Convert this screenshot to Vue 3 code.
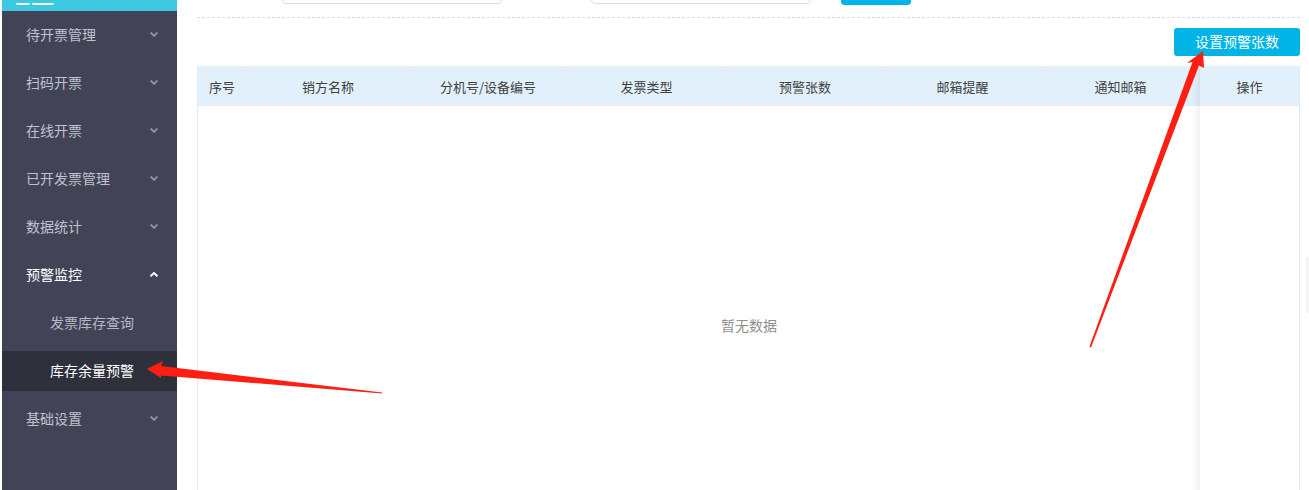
<template>
    <div class="page">
        <aside class="side">
            <div class="side_logo">
                <svg width="60" height="3" viewBox="0 0 60 3">
                    <path d="M16 0h14v1q-1 1-3 1h-8q-2 0-3-1zM32 0h22v1q-1 1-3 1h-16q-2 0-3-1z" fill="#fff"/>
                </svg>
            </div>
            <div v-for="menu in menus" :key="menu.name">
                <div :class="['menu_item', {menu_item_open: menu.children}]">
                    <span class="menu_name">{{menu.name}}</span>
                    <svg class="menu_arrow" width="10" height="7" viewBox="0 0 10 7">
                        <path :d="menu.children ? 'M1.5 5.2 5 2l3.5 3.2' : 'M1.5 1.5 5 4.8l3.5-3.3'" fill="none" stroke="currentColor" stroke-width="2"/>
                    </svg>
                </div>
                <div class="sub_menu" v-if="menu.children">
                    <div
                        v-for="child in menu.children"
                        :key="child.name"
                        :class="['sub_item', {sub_item_active: child.active}]"
                    >{{child.name}}</div>
                </div>
            </div>
        </aside>

        <main class="main">
            <div class="filter">
                <div class="filter_input"></div>
                <div class="filter_input filter_input_second"></div>
                <div class="filter_button"></div>
            </div>
            <div class="toolbar">
                <button class="set_button">设置预警张数</button>
            </div>
            <div class="table">
                <div class="table_left">
                    <div class="table_head">
                        <div
                            v-for="col in columns"
                            :key="col.name"
                            :class="['head_cell', {head_cell_first: col.first}]"
                            :style="{width: col.width + 'px'}"
                        >{{col.name}}</div>
                    </div>
                    <div class="table_body">暂无数据</div>
                </div>
                <div class="table_fixed">
                    <div class="fixed_head">操作</div>
                </div>
            </div>
        </main>

        <div class="scroll_thumb"></div>

        <svg class="marks" width="1309" height="490" viewBox="0 0 1309 490">
            <polygon fill="#ff1e12" points="147,369 163,361 161,366 382,392.6 382,393.6 161,375.5 161,378"/>
            <polygon fill="#ff1e12" points="1203,51 1187,63 1192.5,62 1089.5,346.5 1091,347.5 1199,65.5 1204,68"/>
        </svg>
    </div>
</template>

<script setup>
const menus = [
    {name: "待开票管理"},
    {name: "扫码开票"},
    {name: "在线开票"},
    {name: "已开发票管理"},
    {name: "数据统计"},
    {
        name: "预警监控",
        children: [
            {name: "发票库存查询"},
            {name: "库存余量预警", active: true}
        ]
    },
    {name: "基础设置"}
];

const columns = [
    {name: "序号", width: 50, first: true},
    {name: "销方名称", width: 163},
    {name: "分机号/设备编号", width: 157},
    {name: "发票类型", width: 160},
    {name: "预警张数", width: 157},
    {name: "邮箱提醒", width: 158},
    {name: "通知邮箱", width: 158}
];
</script>

<style>
html, body {
    margin: 0;
    background: #ffffff;
}
</style>

<style scoped>
.page{
    position: relative;
    display: flex;
    width: 1309px;
    height: 490px;
    overflow: hidden;
    background: #ffffff;
    font-family: "Noto Sans CJK SC", "Liberation Sans", sans-serif;
    font-size: 14px;
}

.side{
    flex: none;
    width: 175px;
    margin-left: 2px;
    background: #434358;
}

.side_logo{
    height: 11px;
    background: #3cc8de;
    line-height: 0;
}

.side_logo svg{
    margin-left: -2px;
}

.menu_item{
    display: flex;
    align-items: center;
    justify-content: space-between;
    height: 48px;
    padding: 0 18px 0 24px;
    color: #bdc3cc;
}

.menu_name{
    margin-bottom: 2px;
}

.menu_item_open{
    color: #ffffff;
}

.menu_arrow{
    color: #8d8d9d;
    margin-bottom: 1px;
}

.menu_item_open .menu_arrow{
    color: #ffffff;
}

.sub_menu{
    padding: 4px 0;
}

.sub_item{
    display: flex;
    align-items: center;
    box-sizing: border-box;
    height: 40px;
    margin-bottom: 8px;
    padding: 0 0 2px 48px;
    color: #b4bac3;
}

.sub_item:last-child{
    margin-bottom: 0;
}

.sub_item_active{
    background: #2e303b;
    color: #ffffff;
}

.main{
    flex: 1;
    min-width: 0;
    padding: 0 9px 0 20px;
}

.filter{
    display: flex;
    align-items: flex-end;
    height: 5px;
    padding: 0 0 12px 85px;
    border-bottom: 1px dashed #dcdcdc;
    overflow: hidden;
}

.filter_input{
    width: 218px;
    height: 30px;
    flex: none;
    margin-bottom: 1px;
    border: 1px solid #dcdfe8;
    border-radius: 4px;
}

.filter_input_second{
    margin-left: 89px;
}

.filter_button{
    width: 70px;
    height: 32px;
    flex: none;
    margin-left: 30px;
    border-radius: 4px;
    background: #00b4e6;
}

.toolbar{
    display: flex;
    justify-content: flex-end;
    margin-top: 10px;
}

.set_button{
    width: 126px;
    height: 28px;
    padding: 0 0 2px;
    border: none;
    border-radius: 3px;
    background: #00b4e6;
    color: #ffffff;
    font-family: inherit;
    font-size: 14px;
}

.table{
    display: flex;
    height: 480px;
    margin-top: 10px;
    border-right: 1px solid #e6e8f2;
}

.table_left{
    display: flex;
    flex-direction: column;
    width: 1003px;
    flex: none;
}

.table_head{
    display: flex;
    height: 40px;
    background: #e2f0fc;
    color: #3f3f3f;
    font-size: 13px;
}

.head_cell{
    display: flex;
    align-items: center;
    justify-content: center;
    flex: none;
    box-sizing: border-box;
    border-right: 1px solid #e6eef8;
}

.head_cell_first{
    justify-content: flex-start;
    padding-left: 12px;
}

.table_body{
    display: flex;
    flex: 1;
    align-items: center;
    justify-content: center;
    padding: 0 0 2px 100px;
    border-left: 1px solid #e6e8f2;
    color: #8e8e8e;
}

.table_fixed{
    flex: 1;
    background: #ffffff;
    box-shadow: -4px 0 6px rgba(0, 0, 0, 0.06);
    z-index: 1;
}

.fixed_head{
    display: flex;
    align-items: center;
    justify-content: center;
    height: 40px;
    background: #e2f0fc;
    color: #3f3f3f;
    font-size: 13px;
}

.scroll_thumb{
    position: absolute;
    top: 257px;
    right: 0;
    width: 3px;
    height: 56px;
    background: #f4f4f4;
}

.marks{
    position: absolute;
    top: 0;
    left: 0;
    z-index: 5;
    pointer-events: none;
}
</style>
